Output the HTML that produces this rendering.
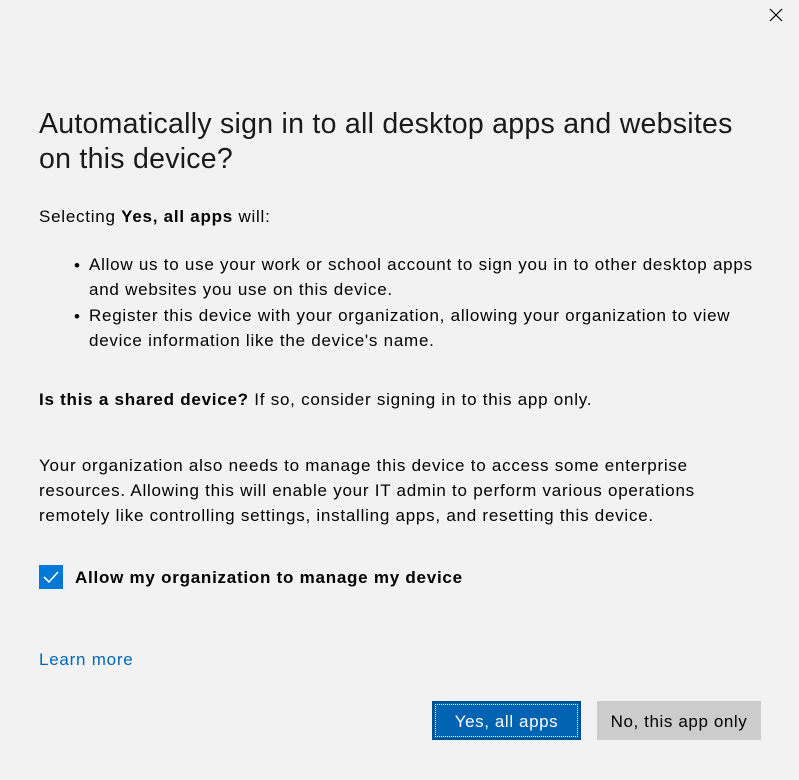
<!DOCTYPE html>
<html><head><style>
body{margin:0;width:799px;height:780px;background:#f2f2f2;font-family:"Segoe UI","Liberation Sans",sans-serif;color:#000;position:relative;overflow:hidden}
.t{position:absolute;white-space:nowrap}
.b{font-size:17px;letter-spacing:0.75px}
h1{position:absolute;left:39px;top:107px;margin:0;font-weight:normal;font-size:28.5px;letter-spacing:0.26px;line-height:35px;color:#1a1a1a}
</style></head><body>
<svg class="t" style="left:769px;top:8px" width="14" height="14"><path d="M1 1L13 13M13 1L1 13" stroke="#000" stroke-width="1.2"/></svg>
<h1>Automatically sign in to all desktop apps and websites<br>on this device?</h1>
<div class="t b" style="left:39px;top:207px">Selecting <b>Yes, all apps</b> will:</div>
<div class="t b" style="left:74px;top:256px">•</div>
<div class="t b" style="left:89px;top:252px;line-height:25px">Allow us to use your work or school account to sign you in to other desktop apps<br>and websites you use on this device.</div>
<div class="t b" style="left:74px;top:307px">•</div>
<div class="t b" style="left:89px;top:303px;line-height:25px">Register this device with your organization, allowing your organization to view<br>device information like the device's name.</div>
<div class="t b" style="left:39px;top:390px"><b>Is this a shared device?</b> If so, consider signing in to this app only.</div>
<div class="t b" style="left:39px;top:453px;line-height:25px">Your organization also needs to manage this device to access some enterprise<br>resources. Allowing this will enable your IT admin to perform various operations<br>remotely like controlling settings, installing apps, and resetting this device.</div>
<div class="t" style="left:39px;top:565px;width:24px;height:24px;background:#0078d7"><svg width="24" height="24"><path d="M5 12L10 17L19 7" stroke="#fff" stroke-width="1.6" fill="none"/></svg></div>
<div class="t b" style="left:75px;top:568px;font-weight:bold">Allow my organization to manage my device</div>
<div class="t b" style="left:39px;top:650px;color:#0067b8">Learn more</div>
<div class="t" style="left:432px;top:701px;width:149px;height:39px;box-sizing:border-box;background:#0063b1;border:2px solid #004e8c;color:#fff;font-size:17px;letter-spacing:0.6px;text-align:center;line-height:37px"><div style="position:absolute;inset:1px;border:1px dotted #fff"></div>Yes, all apps</div>
<div class="t" style="left:597px;top:701px;width:164px;height:39px;background:#cccccc;font-size:17px;letter-spacing:0.6px;text-align:center;line-height:41px">No, this app only</div>
</body></html>
